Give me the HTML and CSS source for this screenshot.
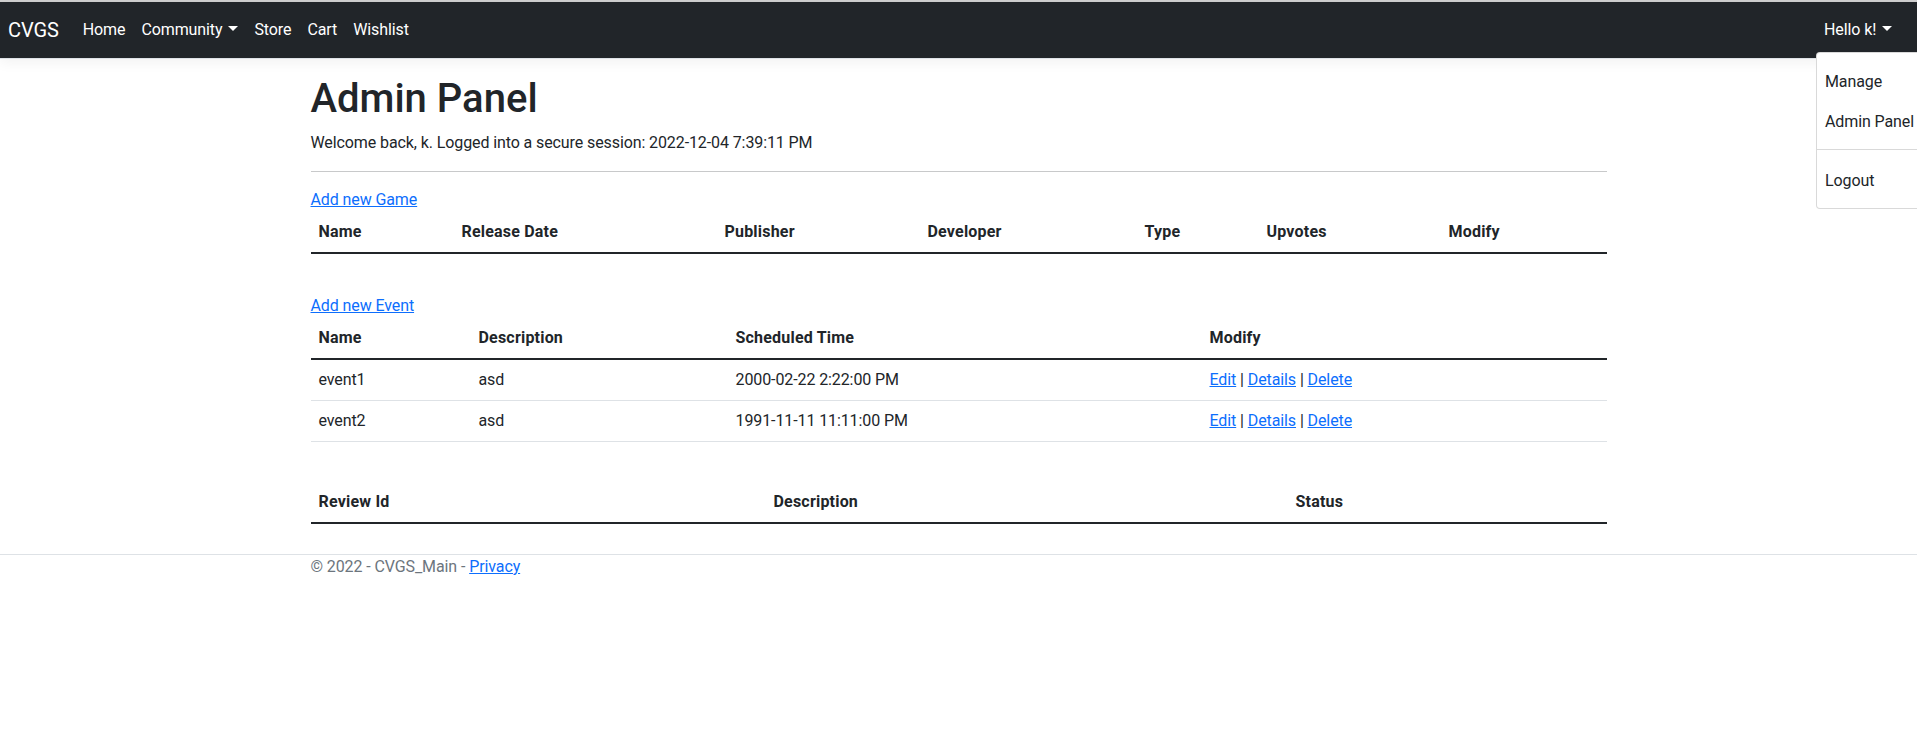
FILE: index.html
```html
<!DOCTYPE html>
<html lang="en">
<head>
<meta charset="utf-8">
<title>Admin Panel - CVGS_Main</title>
<link rel="stylesheet" href="styles.css">
</head>
<body>
<div class="topline"></div>
<header>
  <nav class="navbar">
    <a class="brand" href="#">CVGS</a>
    <ul class="nav-list">
      <li><a class="nav-link" href="#">Home</a></li>
      <li><a class="nav-link caret" href="#">Community</a></li>
      <li><a class="nav-link" href="#">Store</a></li>
      <li><a class="nav-link" href="#">Cart</a></li>
      <li><a class="nav-link" href="#">Wishlist</a></li>
    </ul>
    <ul class="nav-list nav-right">
      <li class="user-item">
        <a class="nav-link caret" href="#">Hello k!</a>
        <div class="dropdown">
          <a class="dropdown-item" href="#">Manage</a>
          <a class="dropdown-item" href="#">Admin Panel</a>
          <div class="dropdown-divider"></div>
          <a class="dropdown-item" href="#">Logout</a>
        </div>
      </li>
    </ul>
  </nav>
</header>
<main class="container">
  <h1 class="title">Admin Panel</h1>
  <p class="welcome">Welcome back, k. Logged into a secure session: 2022-12-04 7:39:11 PM</p>
  <hr class="rule">
  <div class="add-link"><a href="#">Add new Game</a></div>
  <table class="table">
    <colgroup>
      <col class="g1"><col class="g2"><col class="g3"><col class="g4"><col class="g5"><col class="g6"><col class="g7">
    </colgroup>
    <thead>
      <tr><th>Name</th><th>Release Date</th><th>Publisher</th><th>Developer</th><th>Type</th><th>Upvotes</th><th>Modify</th></tr>
    </thead>
    <tbody></tbody>
  </table>
  <div class="add-link spaced"><a href="#">Add new Event</a></div>
  <table class="table">
    <colgroup>
      <col class="e1"><col class="e2"><col class="e3"><col class="e4">
    </colgroup>
    <thead>
      <tr><th>Name</th><th>Description</th><th>Scheduled Time</th><th>Modify</th></tr>
    </thead>
    <tbody>
      <tr><td>event1</td><td>asd</td><td>2000-02-22 2:22:00 PM</td><td><a href="#">Edit</a> | <a href="#">Details</a> | <a href="#">Delete</a></td></tr>
      <tr><td>event2</td><td>asd</td><td>1991-11-11 11:11:00 PM</td><td><a href="#">Edit</a> | <a href="#">Details</a> | <a href="#">Delete</a></td></tr>
    </tbody>
  </table>
  <table class="table spaced">
    <colgroup>
      <col class="r1"><col class="r2"><col class="r3">
    </colgroup>
    <thead>
      <tr><th>Review Id</th><th>Description</th><th>Status</th></tr>
    </thead>
    <tbody></tbody>
  </table>
</main>
<footer class="footer">
  <div class="container">&copy; 2022 - CVGS_Main - <a href="#">Privacy</a></div>
</footer>
</body>
</html>
```
FILE: styles.css
```css
html, body {
  margin: 0;
  padding: 0;
  overflow-x: hidden;
}
body {
  font-family: Roboto, "Noto Sans", sans-serif;
  font-size: 16px;
  line-height: 24px;
  letter-spacing: -0.1px;
  color: #212529;
  background: #fff;
}
a { color: #0d6efd; text-decoration: underline; }

.topline { height: 2px; background: #cfcfcf; }

.navbar {
  display: flex;
  align-items: center;
  background: #212529;
  border-bottom: 1px solid #dee2e6;
  box-shadow: 0 4px 12px rgba(0,0,0,.05);
  padding: 8px 12px 8px 8px;
  margin-bottom: 16px;
}
.brand {
  color: #fff;
  font-size: 20px;
  line-height: 30px;
  padding: 5px 0;
  margin-right: 16px;
  text-decoration: none;
}
.nav-list {
  display: flex;
  list-style: none;
  margin: 0;
  padding: 0;
}
.nav-right { margin-left: auto; }
.nav-link {
  display: block;
  padding: 8px;
  color: #fff;
  text-decoration: none;
}
.caret::after {
  content: "";
  display: inline-block;
  margin-left: 6px;
  vertical-align: 4px;
  border-top: 5px solid;
  border-right: 5px solid transparent;
  border-left: 5px solid transparent;
  border-bottom: 0;
}
.user-item { position: relative; width: 89px; }
.dropdown {
  position: absolute;
  top: 100%;
  left: 0;
  margin-top: 2px;
  min-width: 160px;
  padding: 8px 0;
  background: #fff;
  border: 1px solid rgba(0,0,0,.15);
  border-radius: 4px;
  z-index: 10;
}
.dropdown-item {
  display: block;
  padding: 9px 8px 7px;
  color: #212529;
  text-decoration: none;
  white-space: nowrap;
}
.dropdown-divider {
  height: 0;
  margin: 8px 0 10px;
  border-top: 1px solid rgba(0,0,0,.15);
}

.container {
  max-width: 1296px;
  margin: 0 auto;
  padding: 0 12px;
}
main.container { padding-bottom: 14px; }

.title {
  font-size: 40px;
  line-height: 48px;
  font-weight: 500;
  margin: 0 0 8px;
  letter-spacing: 0;
}
.welcome { margin: 0 0 16px; }
.rule {
  margin: 0 0 16px;
  border: 0;
  border-top: 1px solid #c8c9ca;
  height: 0;
}
.add-link { line-height: 24px; }
.spaced { margin-top: 40px; }

.table {
  width: 100%;
  table-layout: fixed;
  border-collapse: collapse;
  margin-bottom: 16px;
}
.table th, .table td {
  padding: 8px;
  text-align: left;
  vertical-align: top;
  border-bottom: 1px solid #dee2e6;
}
.table th { font-weight: 700; letter-spacing: 0.2px; }
.table thead th { border-bottom: 2px solid #212529; }

.g1 { width: 143px; } .g2 { width: 263px; } .g3 { width: 203px; } .g4 { width: 217px; }
.g5 { width: 122px; } .g6 { width: 182px; } .g7 { width: 166px; }
.e1 { width: 160px; } .e2 { width: 257px; } .e3 { width: 474px; } .e4 { width: 405px; }
.r1 { width: 455px; } .r2 { width: 522px; } .r3 { width: 319px; }

.footer {
  border-top: 1px solid #dee2e6;
  color: #6c757d;
  line-height: 24px;
}
```
